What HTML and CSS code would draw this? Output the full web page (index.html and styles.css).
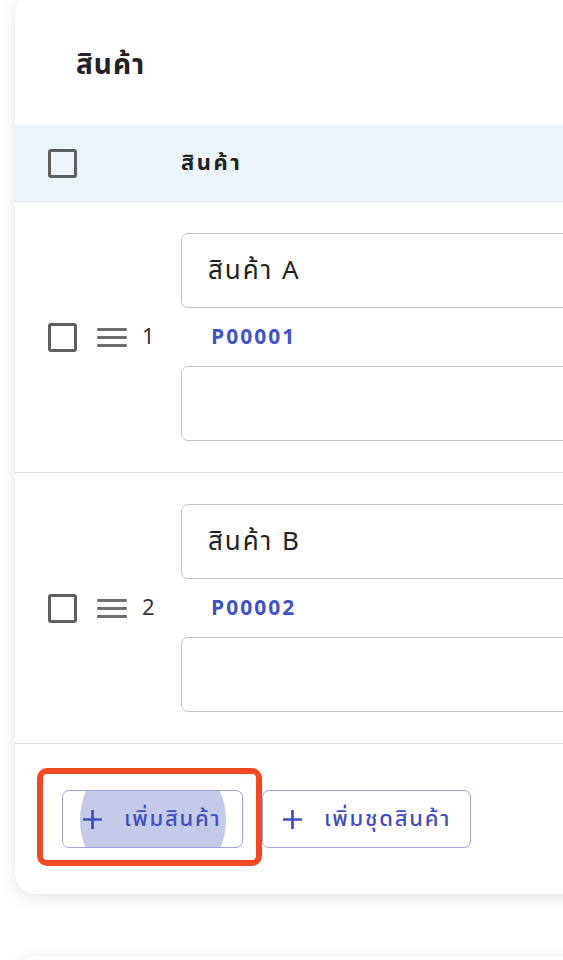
FILE: index.html
```html
<!DOCTYPE html>
<html lang="th">
<head>
<meta charset="utf-8">
<title>สินค้า</title>
<link rel="stylesheet" href="styles.css">
</head>
<body>
<div class="page">
  <section class="card">
    <h2 class="card-title">สินค้า</h2>
    <div class="table">
      <div class="thead">
        <div class="lead"><span class="cb"></span></div>
        <div class="th">สินค้า</div>
      </div>
      <div class="trow">
        <div class="lead">
          <span class="cb"></span>
          <span class="handle"><i></i><i></i><i></i></span>
          <span class="idx">1</span>
        </div>
        <div class="cell">
          <div class="field">สินค้า A</div>
          <div class="code">P00001</div>
          <div class="field"></div>
        </div>
      </div>
      <div class="trow">
        <div class="lead">
          <span class="cb"></span>
          <span class="handle"><i></i><i></i><i></i></span>
          <span class="idx">2</span>
        </div>
        <div class="cell">
          <div class="field">สินค้า B</div>
          <div class="code">P00002</div>
          <div class="field"></div>
        </div>
      </div>
    </div>
    <div class="footer">
      <button class="btn btn-active">
        <span class="ripple"></span>
        <svg class="plus" viewBox="0 0 20 20"><path d="M10 1v18M1 10h18"/></svg>
        <span class="label">เพิ่มสินค้า</span>
      </button>
      <button class="btn">
        <svg class="plus" viewBox="0 0 20 20"><path d="M10 1v18M1 10h18"/></svg>
        <span class="label">เพิ่มชุดสินค้า</span>
      </button>
      <span class="highlight"></span>
    </div>
  </section>
  <section class="card card-next"></section>
</div>
</body>
</html>
```
FILE: styles.css
```css
* { box-sizing: border-box; }
html, body {
  margin: 0;
  padding: 0;
  background: #ffffff;
  overflow: hidden;
}
body {
  font-family: "Noto Sans Thai", "Noto Sans Thai UI", "Noto Sans", "DejaVu Sans", sans-serif;
  color: #222222;
}
.page {
  width: 563px;
  height: 960px;
  overflow: hidden;
  padding-left: 15px;
}
.card {
  width: 1000px;
  margin-top: -10px;
  background: #ffffff;
  border-radius: 20px;
  box-shadow: 0 4px 18px rgba(0, 0, 0, 0.09), 0 0 3px rgba(0, 0, 0, 0.04);
  overflow: hidden;
}
.card-title {
  margin: 0;
  padding: 59px 0 42px 61px;
  font-size: 28px;
  line-height: 34px;
  font-weight: 700;
  letter-spacing: 1px;
  color: #222222;
}
.thead {
  display: flex;
  align-items: center;
  height: 77px;
  background: #ebf3fb;
  border-bottom: 1px solid #dfe3e8;
}
.lead {
  width: 166px;
  flex: none;
  display: flex;
  align-items: center;
  padding-left: 33px;
}
.cb {
  width: 29px;
  height: 29px;
  border: 3px solid #5f5f5f;
  border-radius: 3px;
  flex: none;
}
.th {
  font-size: 22px;
  font-weight: 700;
  letter-spacing: 2.5px;
  color: #222222;
}
.trow {
  display: flex;
  align-items: center;
  padding: 31px 0;
  border-bottom: 1px solid #e0e0e0;
}
.handle {
  display: flex;
  flex-direction: column;
  gap: 5px;
  margin-left: 20px;
  width: 30px;
}
.handle i {
  display: block;
  height: 3px;
  background: #6e6e6e;
  border-radius: 1px;
}
.idx {
  margin-left: 15px;
  font-size: 22px;
  color: #333333;
}
.cell {
  flex: 1;
  display: flex;
  flex-direction: column;
}
.field {
  height: 75px;
  border: 1px solid #c4c4c4;
  border-radius: 7px;
  padding-left: 26px;
  display: flex;
  align-items: center;
  font-size: 26px;
  letter-spacing: 2px;
  color: #222222;
}
.code {
  height: 58px;
  display: flex;
  align-items: center;
  padding-left: 30px;
  font-size: 21px;
  font-weight: 700;
  letter-spacing: 2px;
  color: #4252c6;
}
.footer {
  position: relative;
  display: flex;
  gap: 19px;
  padding: 46px 0 46px 47px;
}
.btn {
  position: relative;
  overflow: hidden;
  display: flex;
  align-items: center;
  height: 58px;
  padding: 0 19px;
  background: #ffffff;
  border: 1.5px solid #9ba4e0;
  border-radius: 7px;
  font-family: inherit;
  font-size: 22px;
  font-weight: 500;
  letter-spacing: 1.8px;
  color: #3f4fc0;
}
.btn-active { width: 181px; }
.ripple {
  position: absolute;
  left: 17px;
  top: -44px;
  width: 146px;
  height: 146px;
  border-radius: 50%;
  background: #c5cae9;
}
.plus {
  position: relative;
  width: 21px;
  height: 21px;
  flex: none;
}
.plus path {
  stroke: #3f4fc0;
  stroke-width: 2.6;
  fill: none;
}
.label {
  position: relative;
  margin-left: 21px;
  white-space: nowrap;
}
.highlight {
  position: absolute;
  left: 22px;
  top: 24px;
  width: 225px;
  height: 98px;
  border: 6px solid #f04923;
  border-radius: 10px;
}
.card-next {
  margin-top: 62px;
  height: 200px;
}
```
